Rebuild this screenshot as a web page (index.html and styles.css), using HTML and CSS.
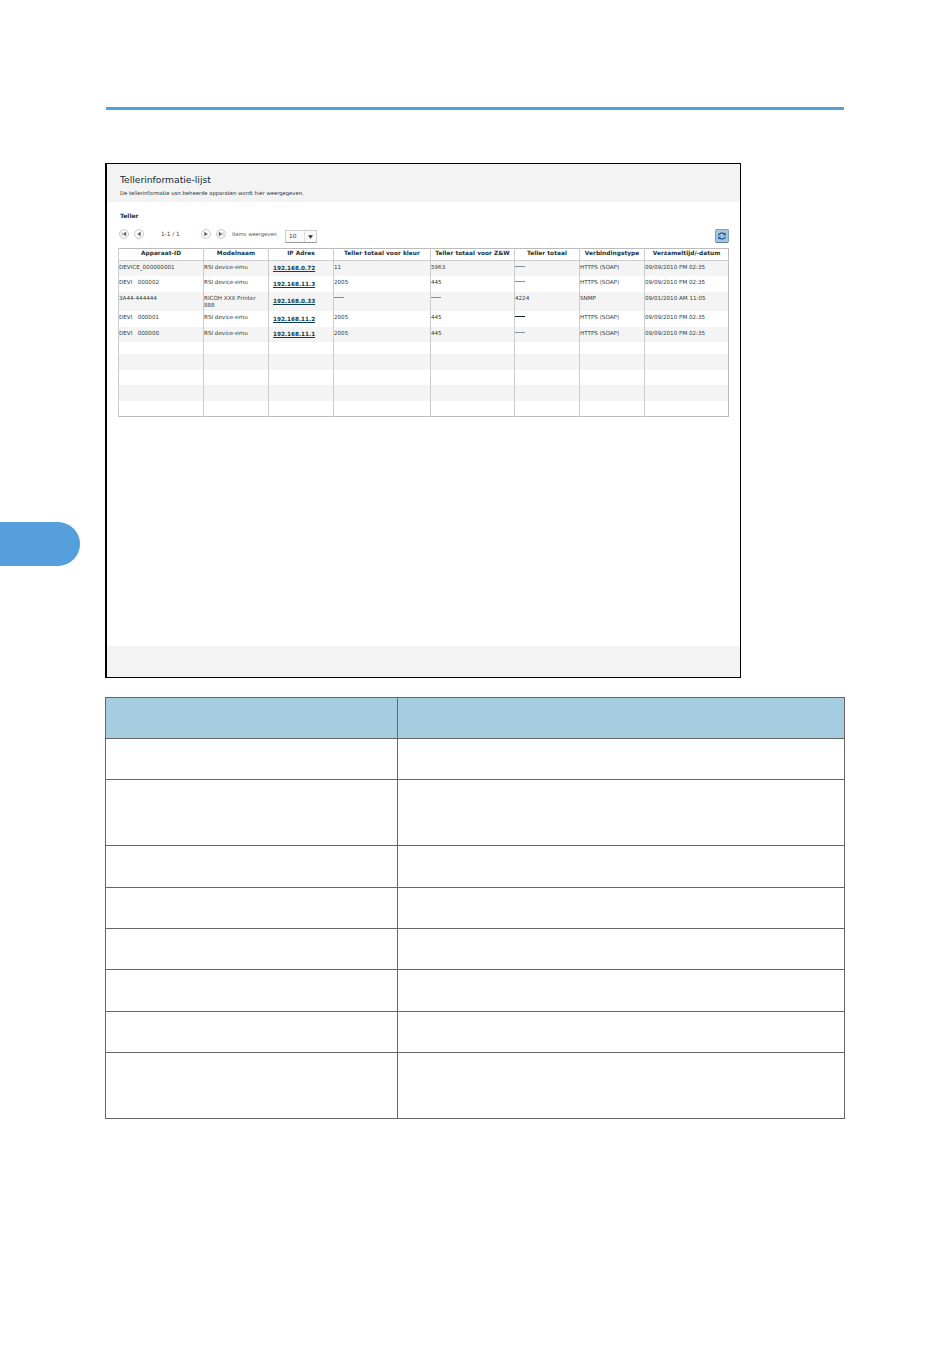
FILE: index.html
```html
<!DOCTYPE html>
<html lang="nl">
<head>
<meta charset="utf-8">
<title>Tellerinformatie-lijst</title>
<link rel="stylesheet" href="styles.css">
</head>
<body>
<div class="tab"></div>
<main class="page">
  <div class="rule"></div>
  <section class="frame">
    <header class="band">
      <h1 class="title">Tellerinformatie-lijst</h1>
      <p class="desc">De tellerinformatie van beheerde apparaten wordt hier weergegeven.</p>
    </header>
    <div class="content">
      <h2 class="section">Teller</h2>
      <div class="toolbar">
        <div class="navgroup">
          <svg class="nav" viewBox="0 0 10 10"><circle cx="5" cy="5" r="4.4"/><path class="glyph" d="M3 3v4M7 3 4 5l3 2z"/></svg>
          <svg class="nav" viewBox="0 0 10 10"><circle cx="5" cy="5" r="4.4"/><path class="glyph" d="M6.5 3 3.5 5l3 2z"/></svg>
        </div>
        <span class="pages">1-1 / 1</span>
        <div class="navgroup">
          <svg class="nav" viewBox="0 0 10 10"><circle cx="5" cy="5" r="4.4"/><path class="glyph" d="M3.5 3l3 2-3 2z"/></svg>
          <svg class="nav" viewBox="0 0 10 10"><circle cx="5" cy="5" r="4.4"/><path class="glyph" d="M7 3v4M3 3l3 2-3 2z"/></svg>
        </div>
        <span class="perpage">Items weergeven</span>
        <div class="select"><span class="selval">10</span><span class="selarrow"><svg viewBox="0 0 6 4" class="caret"><path d="M0 0h6L3 4z"/></svg></span></div>
        <button class="refresh" type="button" aria-label="Vernieuwen"><svg viewBox="0 0 14 14"><path class="arc" d="M3 6.4A4 3.4 0 0 1 10 4.8M11 7.6A4 3.4 0 0 1 4 9.2"/><path class="tip" d="M11.4 2.8v3.4H8zM2.6 11.2V7.8H6z"/></svg></button>
      </div>
      <table class="data">
        <colgroup><col class="c85"><col class="c65"><col class="c65"><col class="c97"><col class="c84"><col class="c65"><col class="c65"><col class="c84"></colgroup>
        <thead>
          <tr><th>Apparaat-ID</th><th>Modelnaam</th><th>IP Adres</th><th>Teller totaal voor kleur</th><th>Teller totaal voor Z&amp;W</th><th>Teller totaal</th><th>Verbindingstype</th><th>Verzameltijd/-datum</th></tr>
        </thead>
        <tbody>
          <tr class="r15 alt"><td>DEVICE_000000001</td><td>RSI device-emu</td><td class="ipcell"><a class="ip">192.168.0.72</a></td><td>11</td><td>5963</td><td><span class="dash"></span></td><td>HTTPS (SOAP)</td><td>09/09/2010 PM 02:35</td></tr>
          <tr class="r16"><td>DEVI&nbsp;&nbsp;&nbsp;000002</td><td>RSI device-emu</td><td class="ipcell"><a class="ip">192.168.11.3</a></td><td>2005</td><td>445</td><td><span class="dash"></span></td><td>HTTPS (SOAP)</td><td>09/09/2010 PM 02:35</td></tr>
          <tr class="r19 alt"><td>3A44-444444</td><td>RICOH XXX Printer 888</td><td class="ipcell"><a class="ip">192.168.0.33</a></td><td><span class="dash"></span></td><td><span class="dash"></span></td><td>4224</td><td>SNMP</td><td>09/01/2010 AM 11:05</td></tr>
          <tr class="r16"><td>DEVI&nbsp;&nbsp;&nbsp;000001</td><td>RSI device-emu</td><td class="ipcell"><a class="ip">192.168.11.2</a></td><td>2005</td><td>445</td><td><span class="dash dark"></span></td><td>HTTPS (SOAP)</td><td>09/09/2010 PM 02:35</td></tr>
          <tr class="r15 alt"><td>DEVI&nbsp;&nbsp;&nbsp;000000</td><td>RSI device-emu</td><td class="ipcell"><a class="ip">192.168.11.1</a></td><td>2005</td><td>445</td><td><span class="dash"></span></td><td>HTTPS (SOAP)</td><td>09/09/2010 PM 02:35</td></tr>
          <tr class="r12"><td></td><td></td><td></td><td></td><td></td><td></td><td></td><td></td></tr>
          <tr class="r16 alt"><td></td><td></td><td></td><td></td><td></td><td></td><td></td><td></td></tr>
          <tr class="r15"><td></td><td></td><td></td><td></td><td></td><td></td><td></td><td></td></tr>
          <tr class="r16 alt"><td></td><td></td><td></td><td></td><td></td><td></td><td></td><td></td></tr>
          <tr class="r16"><td></td><td></td><td></td><td></td><td></td><td></td><td></td><td></td></tr>
        </tbody>
      </table>
    </div>
    <footer class="foot"></footer>
  </section>
  <table class="spec">
    <colgroup><col class="s1"><col></colgroup>
    <thead><tr class="h41"><th></th><th></th></tr></thead>
    <tbody>
      <tr class="h41"><td></td><td></td></tr>
      <tr class="h66"><td></td><td></td></tr>
      <tr class="h42"><td></td><td></td></tr>
      <tr class="h41"><td></td><td></td></tr>
      <tr class="h41"><td></td><td></td></tr>
      <tr class="h42"><td></td><td></td></tr>
      <tr class="h41"><td></td><td></td></tr>
      <tr class="h66"><td></td><td></td></tr>
    </tbody>
  </table>
</main>
</body>
</html>
```
FILE: styles.css
```css
html, body { margin: 0; padding: 0; background: #fff; }
body { position: relative; width: 950px; height: 1348px; overflow: hidden; font-family: "DejaVu Sans", sans-serif; color: #1d3a44; }
.tab { position: absolute; left: 0; top: 522px; width: 80px; height: 44px; background: #559fdc; border-radius: 0 22px 22px 0; }
.page { padding: 107px 0 0 105px; }
.rule { width: 738px; height: 3px; margin-left: 1px; background: #559fdc; }
.frame { box-sizing: border-box; display: flex; flex-direction: column; width: 636px; height: 515px; margin-top: 53px; border: 1px solid #000; border-left-width: 2px; background: #fff; }
.band { height: 38px; background: #f3f3f3; padding: 11px 0 0 13px; box-sizing: border-box; }
.title { margin: 0; font-size: 9.2px; line-height: 10px; font-weight: 400; color: #0f2a33; }
.desc { margin: 5px 0 0; font-size: 5.25px; line-height: 7px; color: #1d2f36; }
.content { padding: 10px 11px 0 11px; flex: 1; }
.section { margin: 0 0 0 2px; font-size: 6px; line-height: 8px; font-weight: 700; color: #1d2f36; }
.toolbar { display: flex; align-items: center; height: 15px; margin-top: 6px; padding-left: 1px; }
.navgroup { display: flex; gap: 5px; }
.nav { width: 10px; height: 10px; }
.nav circle { fill: #fff; stroke: #bbb; stroke-width: .8; }
.glyph { fill: #567; stroke: #567; stroke-width: .4; }
.pages { width: 57px; padding-left: 17px; box-sizing: border-box; font-size: 5.8px; color: #34454c; }
.perpage { margin-left: 6px; width: 53px; font-size: 5.2px; color: #4a5a60; }
.select { display: flex; width: 32px; height: 13px; box-sizing: border-box; border: 1px solid #ccc; border-bottom-color: #999; margin-top: 6px; background: #fafafa; font-size: 5.8px; line-height: 11px; }
.selval { width: 18px; padding-left: 3px; box-sizing: border-box; }
.selarrow { flex: 1; display: flex; align-items: center; justify-content: center; border-left: 1px solid #ddd; }
.caret { width: 5px; height: 4px; fill: #234; }
.refresh { margin: 4px 0 0 auto; width: 14px; height: 14px; padding: 0; border: 1px solid #7f9fb6; border-bottom-color: #5f7f96; border-radius: 2px; background: #a6c6dc; }
.refresh svg { display: block; width: 12px; height: 12px; }
.arc { fill: none; stroke: #175a94; stroke-width: 1.5; }
.tip { fill: #175a94; }
.data { table-layout: fixed; border-collapse: collapse; width: 610px; margin-top: 7px; border: 1px solid #bbb; font-size: 5.6px; color: #2a3b40; }
.c85 { width: 85px; } .c65 { width: 65px; } .c97 { width: 97px; } .c84 { width: 84px; }
.data th { box-sizing: border-box; height: 12px; padding: 0 0 2px; border-left: 1px solid #ccc; border-bottom: 1px solid #ccc; background: #fff; font-size: 5.8px; line-height: 9px; letter-spacing: .05px; font-weight: 700; color: #1d2f36; text-align: center; white-space: nowrap; }
.data td { padding: 3px 0 0; border-left: 1px solid #ccc; vertical-align: top; line-height: 7px; overflow: hidden; white-space: nowrap; }
.data tr:nth-child(3) td { white-space: normal; }
.data td.ipcell { padding: 1px 0 0; vertical-align: middle; }
.alt td { background: #f4f4f4; }
.r12 { height: 12px; } .r15 { height: 15px; } .r16 { height: 16px; } .r19 { height: 19px; }
.ip { display: inline-block; margin: 0 0 0 4px; font-size: 5.7px; font-weight: 700; color: #123c4a; text-decoration: underline; }
.dash { display: block; width: 10px; height: 1px; margin-top: 2px; background: #7f9298; }
.dash.dark { background: #123; }
.foot { height: 31px; background: #f3f3f3; }
.spec { table-layout: fixed; border-collapse: collapse; width: 740px; margin-top: 19px; }
.s1 { width: 292px; }
.spec th, .spec td { padding: 0; border: 1px solid #666; }
.spec th { background: #a5cddf; }
.h41 { height: 41px; } .h42 { height: 42px; } .h66 { height: 66px; }
```
